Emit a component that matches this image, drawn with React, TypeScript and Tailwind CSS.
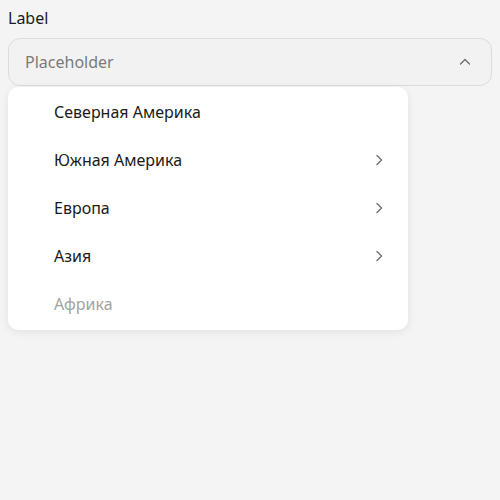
import React from 'react';

const items = [
  { name: 'Северная Америка', sub: false, disabled: false },
  { name: 'Южная Америка', sub: true, disabled: false },
  { name: 'Европа', sub: true, disabled: false },
  { name: 'Азия', sub: true, disabled: false },
  { name: 'Африка', sub: false, disabled: true },
];

const Chevron: React.FC<{ dir: 'up' | 'right' }> = ({ dir }) => (
  <svg width="14" height="14" viewBox="0 0 14 14" fill="none" stroke="#6b6b6b" strokeWidth="1.3" strokeLinecap="round" strokeLinejoin="round">
    {dir === 'up' ? <path d="M2.5 9L7 4.5L11.5 9" /> : <path d="M5 2.5L9.5 7L5 11.5" />}
  </svg>
);

const App: React.FC = () => {
  return (
    <div className="min-h-screen w-full bg-[#f4f4f4] px-2 pt-2 font-['Noto_Sans',sans-serif] text-[#1a1a1a]">
      <div className="h-[21px] text-[16px] leading-[21px]">Label</div>
      <div className="mt-[9px] flex h-[48px] items-center justify-between rounded-[12px] border border-[#dcdcdc] bg-[#f2f2f2] pl-4 pr-[19px]">
        <span className="text-[16px] text-[#7a7a7a]">Placeholder</span>
        <Chevron dir="up" />
      </div>
      <div className="mt-[1px] w-[400px] rounded-[10px] bg-white pt-[1px] pb-[2px] shadow-[0_2px_8px_rgba(0,0,0,0.08)]">
        {items.map((it) => (
          <div key={it.name} className="flex h-[48px] items-center justify-between pl-[46px] pr-[22px]">
            <span className={`text-[16px] ${it.disabled ? 'text-[#a3a3a3]' : 'text-[#1a1a1a]'}`}>{it.name}</span>
            {it.sub && <Chevron dir="right" />}
          </div>
        ))}
      </div>
    </div>
  );
};

export default App;
